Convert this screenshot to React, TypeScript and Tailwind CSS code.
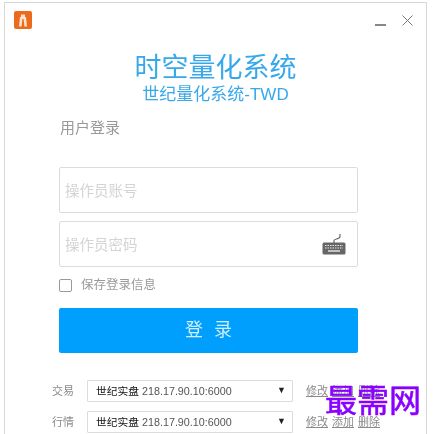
const font = "[font-family:'Liberation_Sans','Noto_Sans_CJK_SC',sans-serif]";

function Logo() {
  return (
    <div className="flex h-[18px] w-[18px] items-center justify-center rounded-[2px] bg-[#ec6a1c]">
      <svg width="10" height="13" viewBox="0 0 10 13" fill="none">
        <path d="M3 0.5h4V3h1l1 9.5H6.4L5.6 5h-1.2L3.6 12.5H1L2 3h1z" fill="#fbe3cf" />
      </svg>
    </div>
  );
}

function KeyboardIcon() {
  return (
    <svg width="24" height="22" viewBox="0 0 24 22" fill="none">
      <path d="M12 10V7.5C12 5.5 18 6.5 18 3.5V1" stroke="#666" strokeWidth="1.2" />
      <rect x="0.5" y="9.5" width="23" height="12" rx="1.5" fill="#666" />
      <path d="M3 12.5h18M3 15h18" stroke="#e8e8e8" strokeWidth="1.2" strokeDasharray="1.5 1" />
      <path d="M6 18h12" stroke="#e8e8e8" strokeWidth="1.4" />
    </svg>
  );
}

function ServerRow({ label }: { label: string }) {
  return (
    <div className="flex h-[22px] items-center">
      <span className="ml-[47px] w-[35px] text-[11px] text-[#8a8a8a]">{label}</span>
      <div className="flex h-[22px] w-[206px] items-center justify-between rounded-[1px] border border-[#dcdcdc] bg-white pl-[8px] pr-[6px]">
        <span className="text-[10.75px] text-[#555]">
          <span className="text-[#111]">世纪实盘</span> 218.17.90.10:6000
        </span>
        <span className="text-[9px] text-[#222]">▼</span>
      </div>
      <div className="ml-[13px] flex gap-[4px] text-[11px] text-[#8a8a8a] underline">
        <span>修改</span>
        <span>添加</span>
        <span>删除</span>
      </div>
    </div>
  );
}

export default function App() {
  return (
    <div className={`relative h-[434px] w-[438px] overflow-hidden bg-white blur-[0.35px] ${font}`}>
      <div className="ml-[4px] mt-[2px] h-[440px] w-[423px] border border-[#d8d8d8] bg-white">
        <div className="flex h-[46px] items-start justify-between pl-[9px] pr-[13px] pt-[8px]">
          <Logo />
          <div className="flex items-start gap-[16px] pt-[4px]">
            <div className="mt-[9px] h-[1.5px] w-[11px] bg-[#888]" />
            <svg width="11" height="11" viewBox="0 0 11 11" fill="none">
              <path d="M0.5 0.5l10 10M10.5 0.5l-10 10" stroke="#777" strokeWidth="1" />
            </svg>
          </div>
        </div>
        <div className="text-center text-[27px] leading-[38px] text-[#37a8ea]">时空量化系统</div>
        <div className="mt-[-3px] text-center text-[17px] leading-[22px] text-[#37a8ea]">世纪量化系统-TWD</div>
        <div className="ml-[55px] mt-[12px] text-[15px] leading-[20px] text-[#999]">用户登录</div>
        <div className="ml-[54px] mt-[29px] flex w-[299px] flex-col">
          <div className="flex h-[46px] items-center rounded-[2px] border border-[#dcdcdc] pl-[5px] pt-[3px] text-[14.5px] text-[#d4d4d4]">
            操作员账号
          </div>
          <div className="mt-[8px] flex h-[46px] items-center justify-between rounded-[2px] border border-[#dcdcdc] pl-[5px] pr-[11px] text-[14.5px] text-[#d4d4d4]">
            <span className="pt-[3px]">操作员密码</span>
            <KeyboardIcon />
          </div>
          <div className="mt-[11px] flex h-[14px] items-center">
            <div className="h-[13px] w-[13px] rounded-[2px] border border-[#999]" />
            <span className="ml-[9px] text-[12.5px] text-[#9a9a9a]">保存登录信息</span>
          </div>
          <div className="mt-[16px] flex h-[45px] items-center justify-center gap-[11px] rounded-[2px] bg-[#009ffd] text-[18px] text-[#cfeeff]">
            <span>登</span>
            <span>录</span>
          </div>
        </div>
        <div className="mt-[27px] flex flex-col gap-[9px]">
          <ServerRow label="交易" />
          <ServerRow label="行情" />
        </div>
      </div>
      <div className="absolute left-[325px] top-[381px] font-['Liberation_Serif','Noto_Sans_CJK_SC',serif] text-[32px] font-normal leading-[40px] text-[#8a00ff] [-webkit-text-stroke:0.6px_#8a00ff]">
        最需网
      </div>
    </div>
  );
}
